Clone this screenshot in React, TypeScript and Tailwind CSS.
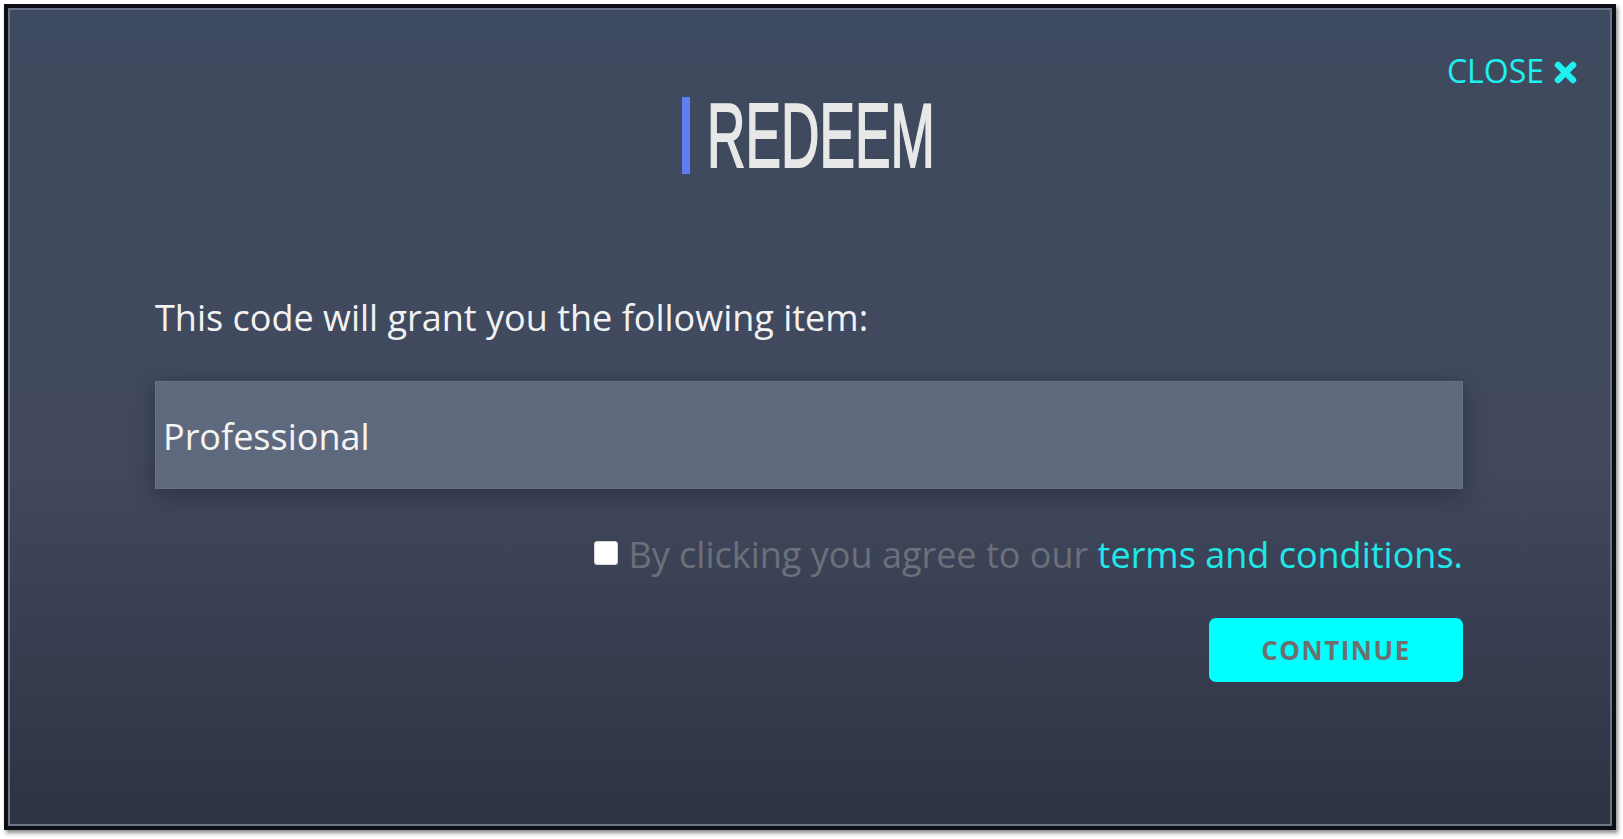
import React from "react";

export default function App() {
  return (
    <div className="w-[1623px] h-[839px] bg-white pt-[4px] pl-[4px] overflow-hidden">
      <div className="w-[1612px] h-[826px] border-[4px] border-[#0b0e13] shadow-[2px_3px_4px_rgba(0,0,0,0.45)]">
        <div className="w-full h-full border-[2px] border-[#6c7488]">
          <div
            className="relative w-full h-full flex flex-col bg-gradient-to-b from-[#3e4a5f] via-[#42495e] via-55% to-[#2e3343] pl-[145px] pr-[147px] pt-[81px]"
            style={{ fontFamily: '"Open Sans", "Noto Sans", sans-serif' }}
          >
            <button className="absolute top-[45px] right-[33px] flex items-center gap-[10px] text-[32px] leading-none text-[#1ff0f0]">
              <span>CLOSE</span>
              <svg width="23" height="23" viewBox="0 0 23 23" className="mt-[2px]">
                <path d="M4 4 L19 19 M19 4 L4 19" stroke="#1ff0f0" strokeWidth="6.5" strokeLinecap="round" fill="none" />
              </svg>
            </button>

            <div className="flex items-center justify-center h-[89px] pl-[10px]">
              <div className="w-[8px] h-[77px] bg-[#5f7ef5]" />
              <div className="w-[240px] h-[89px] flex items-center justify-start ml-[17px]">
                <span
                  className="inline-block origin-left scale-x-[0.585] text-[91px] leading-none text-[#e8e8e8] [-webkit-text-stroke:2px_#e8e8e8]"
                  style={{ fontFamily: '"Liberation Sans", Arial, sans-serif' }}
                >
                  REDEEM
                </span>
              </div>
            </div>

            <p className="mt-[120px] text-[36px] leading-none text-[#f2f2f2]">
              This code will grant you the following item:
            </p>

            <div className="mt-[45px] h-[108px] flex items-center pl-[7px] pt-[3px] bg-[#5f697d] border border-[#66708a] shadow-[0_6px_24px_rgba(20,24,34,0.45)]">
              <span className="text-[36px] leading-none text-[#f4f4f4]">Professional</span>
            </div>

            <div className="mt-[48px] flex items-start justify-end h-[36px]">
              <span className="mt-[4px] w-[24px] h-[24px] bg-white rounded-[3px] border border-[#d8d8d8] mr-[10px]" />
              <span className="text-[36px] leading-none text-[#6b707a]">
                By clicking you agree to our{" "}
                <span className="text-[#1ee8ea]">terms and conditions.</span>
              </span>
            </div>

            <div className="mt-[45px] flex justify-end">
              <button className="w-[254px] h-[64px] rounded-[7px] bg-[#00ffff] text-[26px] font-bold tracking-[1.5px] text-[#6f6f6f] flex items-center justify-center">
                CONTINUE
              </button>
            </div>
          </div>
        </div>
      </div>
    </div>
  );
}
